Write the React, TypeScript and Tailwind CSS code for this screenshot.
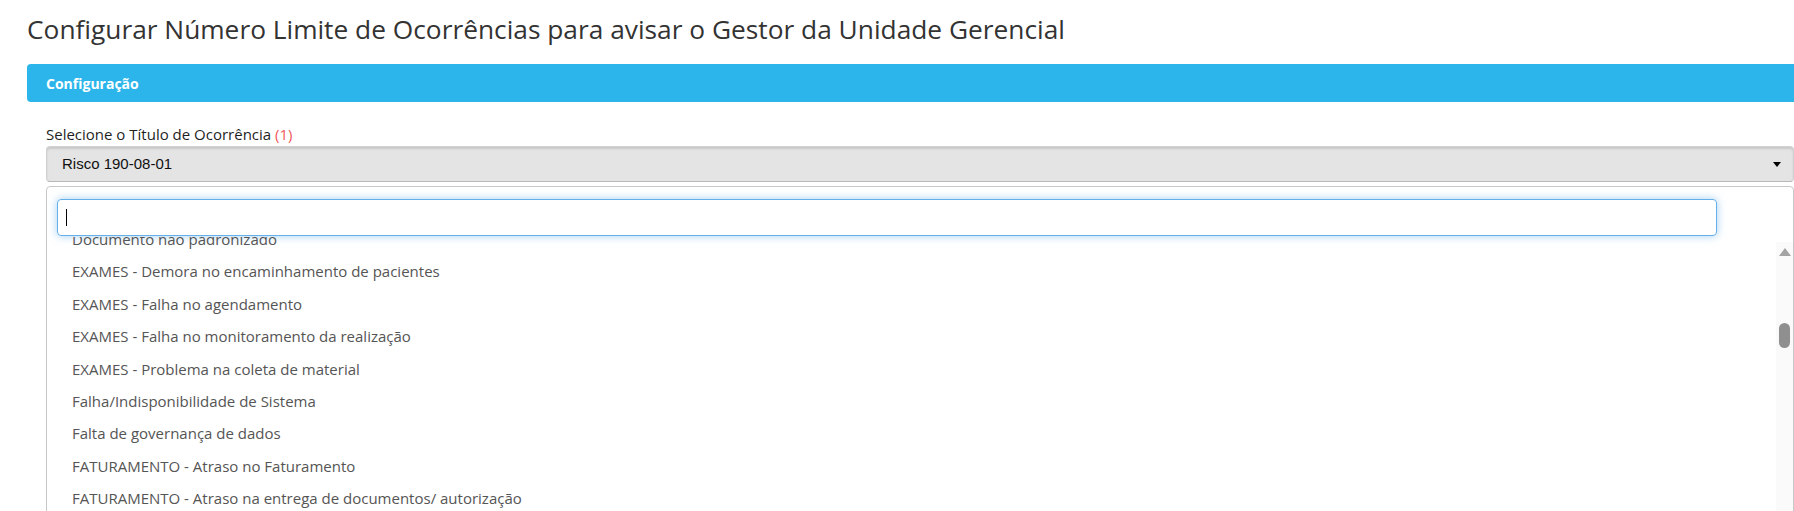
import React from "react"

const items = [
  "Documento não padronizado",
  "EXAMES - Demora no encaminhamento de pacientes",
  "EXAMES - Falha no agendamento",
  "EXAMES - Falha no monitoramento da realização",
  "EXAMES - Problema na coleta de material",
  "Falha/Indisponibilidade de Sistema",
  "Falta de governança de dados",
  "FATURAMENTO - Atraso no Faturamento",
  "FATURAMENTO - Atraso na entrega de documentos/ autorização",
  "FATURAMENTO - Glosa de procedimentos",
]

export default function App() {
  return (
    <div className="w-[1794px] h-[511px] overflow-hidden bg-white font-['Open_Sans',sans-serif]">
      <div className="pl-[27px]">
        <h1 className="mt-[11px] text-[26.3px] leading-[36px] text-[#333] font-normal">
          Configurar Número Limite de Ocorrências para avisar o Gestor da Unidade Gerencial
        </h1>

        <div className="mt-[17px] w-[1786px]">
          {/* panel header */}
          <div className="h-[38px] rounded-[4px] bg-[#2cb5eb] flex items-center px-[19px]">
            <span className="text-[14px] font-bold text-white">Configuração</span>
          </div>

          <div className="px-[19px] pt-[22px]">
            <label className="block text-[15px] leading-[20px] text-[#1f1f1f]">
              Selecione o Título de Ocorrência <span className="text-[#f0585c]">(1)</span>
            </label>

            {/* select */}
            <div className="mt-[2px] h-[36px] rounded-[4px] bg-[#e4e4e4] border border-[#d2d2d2] border-b-[#b8b8b8] shadow-[inset_0_2px_2px_rgba(0,0,0,0.12)] flex items-center justify-between pl-[15px] pr-[12px]">
              <span className="font-['Liberation_Sans',Arial,sans-serif] text-[15px] text-[#111]">Risco 190-08-01</span>
              <span className="w-0 h-0 border-l-[4px] border-r-[4px] border-t-[5px] border-l-transparent border-r-transparent border-t-black" />
            </div>

            {/* dropdown */}
            <div className="mt-[4px] h-[400px] rounded-t-[4px] border border-[#c8c8c8] bg-white">
              <div className="pt-[12px] pl-[10px]">
                <div className="w-[1660px] h-[37px] rounded-[4px] border border-[#66afe9] shadow-[0_0_8px_rgba(102,175,233,0.6)] flex items-center pl-[8px]">
                  <div className="w-px h-[17px] bg-black" />
                </div>
              </div>

              <div className="mt-px flex h-[300px]">
                <div className="flex-1 overflow-hidden">
                  <ul className="-mt-[14px]">
                    {items.map((item) => (
                      <li
                        key={item}
                        className="h-[32.4px] flex items-center pl-[25px] text-[15px] text-[#555]"
                      >
                        {item}
                      </li>
                    ))}
                  </ul>
                </div>
                <div className="w-[17px] pt-[5px]">
                  <div className="h-full bg-[#fafafa] flex flex-col items-center pt-[6px]">
                    <span className="w-0 h-0 border-l-[6px] border-r-[6px] border-b-[8px] border-l-transparent border-r-transparent border-b-[#a3a3a3]" />
                    <div className="mt-[67px] w-[11px] h-[25px] rounded-full bg-[#8f8f8f]" />
                  </div>
                </div>
              </div>
            </div>
          </div>
        </div>
      </div>
    </div>
  )
}
